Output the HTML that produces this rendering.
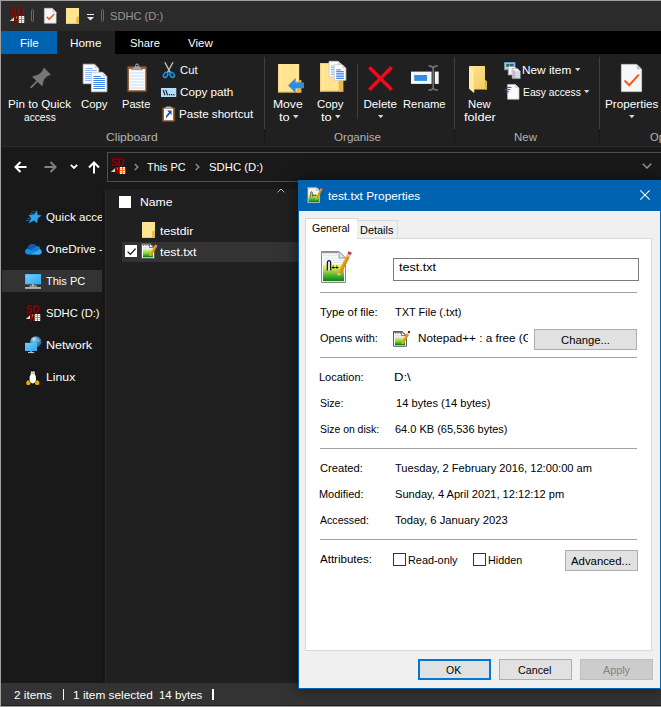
<!DOCTYPE html>
<html lang="en"><head><meta charset="utf-8"><title>SDHC (D:)</title>
<style>
html,body{margin:0;padding:0;background:#191919;}
body{width:661px;height:707px;overflow:hidden;position:relative;font-family:"Liberation Sans", sans-serif;}
#w{position:absolute;left:0;top:0;width:661px;height:707px;overflow:hidden;background:#191919;}
#w div{position:absolute;box-sizing:border-box;}
#w svg{position:absolute;overflow:visible;}
.t{position:absolute;white-space:pre;transform-origin:0 0;font-family:"Liberation Sans", sans-serif;}
</style></head><body><div id="w">
<div style="left:0px;top:0px;width:661px;height:31px;background:#2b2b2b;"></div>
<div style="left:0px;top:31px;width:661px;height:23px;background:#000;"></div>
<div style="left:1px;top:31px;width:56px;height:23px;background:#0063b1;"></div>
<div style="left:57px;top:31px;width:58px;height:23px;background:#202020;"></div>
<div style="left:0px;top:54px;width:661px;height:92px;background:#202020;"></div>
<div style="left:0px;top:146px;width:661px;height:1px;background:#2b2b2b;"></div>
<div style="left:0px;top:147px;width:661px;height:41px;background:#191919;"></div>
<svg style="left:10px;top:7px" width="16" height="16" viewBox="0 0 16 16"><text x="-0.3" y="8" font-family="Liberation Sans, sans-serif" font-weight="bold" font-size="11" fill="#8e0000" textLength="13.6" lengthAdjust="spacingAndGlyphs">SD</text><polygon points="0,14 4.2,10 4.2,14" fill="#e6dc9a"/><polygon points="0,14 2.2,12 2.2,14" fill="#b8c4e8"/><rect x="4.2" y="9" width="1.9" height="7" fill="#8b0000"/><rect x="6.9" y="9" width="1.9" height="7" fill="#8b0000"/><rect x="4.2" y="11.6" width="4.6" height="2" fill="#8b0000"/><rect x="6.1" y="9.4" width="0.8" height="2.2" fill="#b8b030"/><rect x="8.8" y="9" width="5.4" height="7" fill="#fff"/><rect x="11" y="9" width="1" height="7" fill="#ff6a00"/><rect x="8.8" y="12" width="5.4" height="1" fill="#ff6a00"/><rect x="9.5" y="10" width="1" height="1" fill="#ff6a00"/><rect x="12.6" y="10" width="1" height="1" fill="#ff6a00"/><rect x="9.5" y="14" width="1" height="1" fill="#ff6a00"/><rect x="12.6" y="14" width="1" height="1" fill="#ff6a00"/></svg>
<div style="left:31px;top:9px;width:3px;height:13px;border:1px solid #6a6a6a;border-radius:1.5px;"></div>
<svg style="left:44px;top:8px" width="12.5" height="15.5" viewBox="0 0 12 15"><path d="M0.3 0.3 H8 L11.7 4 V14.7 H0.3 Z" fill="#f6f6f6" stroke="#c9c9c9" stroke-width="0.6"/><path d="M8 0.3 V4 H11.7 Z" fill="#cfcfcf"/><path d="M2.6 8.6 L5 11 L9.8 5.8" fill="none" stroke="#f0602a" stroke-width="1.5"/></svg>
<svg style="left:66px;top:8px" width="13" height="16" viewBox="0 0 13 16"><rect x="0" y="0" width="13" height="16" fill="#ffe48f"/><path d="M10.2 9.28 L13 8.32 L13 16 L10.2 16 Z" fill="#e8b84a"/><rect x="0" y="15.2" width="13" height="0.8" fill="#e9c460"/></svg>
<div style="left:87px;top:14px;width:7px;height:1px;background:#e8e8e8;"></div>
<svg style="left:87px;top:16.5px" width="7" height="3.5" viewBox="0 0 7 3.5"><polygon points="0,0 7,0 3.5,3.5" fill="#e8e8e8"/></svg>
<div style="left:101px;top:9px;width:3px;height:13px;border:1px solid #6a6a6a;border-radius:1.5px;"></div>
<span class="t" style="left:110.02px;top:10.18px;font-size:11.6px;line-height:11.6px;color:#989898;transform:scaleX(0.9585);">SDHC (D:)</span>
<span class="t" style="left:19.60px;top:37.18px;font-size:11.6px;line-height:11.6px;color:#fff;transform:scaleX(0.9971);">File</span>
<span class="t" style="left:69.98px;top:37.18px;font-size:11.6px;line-height:11.6px;color:#fff;transform:scaleX(1.0169);">Home</span>
<span class="t" style="left:129.52px;top:37.18px;font-size:11.6px;line-height:11.6px;color:#fff;transform:scaleX(0.9667);">Share</span>
<span class="t" style="left:188.00px;top:37.18px;font-size:11.6px;line-height:11.6px;color:#fff;transform:scaleX(1.0000);">View</span>
<svg style="left:29.5px;top:67px" width="21" height="21" viewBox="0 0 21 21"><g fill="#767676" stroke="#767676"><path d="M0.6 20.8 L8 13.4" stroke-width="1.7" fill="none"/><path d="M14 0.9 L20.5 7.4 L16.9 9.2 L13.6 12.7 L12.1 19 L2.4 9.7 L8.4 7.8 L12.1 4.8 Z" stroke-width="0.5" stroke-linejoin="round"/></g></svg>
<svg style="left:83px;top:64px" width="25" height="28" viewBox="0 0 25 28"><path d="M0.2 0.2 H11.5 L15.7 4.4 V19.7 H0.2 Z" fill="#fdfdfd" stroke="#c8c8c8" stroke-width="0.8"/><path d="M11.5 0.2 V4.4 H15.7 Z" fill="#d4d4d4"/><rect x="2.2" y="4.00" width="7.5" height="1" fill="#8ab8f4"/><rect x="2.2" y="6.00" width="11.5" height="1" fill="#8ab8f4"/><rect x="2.2" y="8.00" width="11.5" height="1" fill="#8ab8f4"/><rect x="2.2" y="10.00" width="11.5" height="1" fill="#8ab8f4"/><rect x="2.2" y="12.00" width="11.5" height="1" fill="#8ab8f4"/><rect x="2.2" y="14.00" width="11.5" height="1" fill="#8ab8f4"/><rect x="2.2" y="16.00" width="11.5" height="1" fill="#8ab8f4"/><path d="M8.4 8.3 H19.7 L23.9 12.5 V27.8 H8.4 Z" fill="#fdfdfd" stroke="#c8c8c8" stroke-width="0.8"/><path d="M19.7 8.3 V12.5 H23.9 Z" fill="#d4d4d4"/><rect x="10.4" y="12.00" width="7.5" height="1" fill="#3b82e6"/><rect x="10.4" y="14.00" width="11.5" height="1" fill="#3b82e6"/><rect x="10.4" y="16.00" width="11.5" height="1" fill="#3b82e6"/><rect x="10.4" y="18.00" width="11.5" height="1" fill="#3b82e6"/><rect x="10.4" y="20.00" width="11.5" height="1" fill="#3b82e6"/><rect x="10.4" y="22.00" width="11.5" height="1" fill="#3b82e6"/><rect x="10.4" y="24.00" width="11.5" height="1" fill="#3b82e6"/></svg>
<svg style="left:127px;top:63px" width="20" height="29" viewBox="0 0 20 29"><rect x="0.4" y="3.4" width="19.2" height="25.4" rx="1.2" fill="#9a6038" stroke="#6e3f20" stroke-width="0.8"/><rect x="2" y="6" width="16.2" height="21.2" fill="#fbfcff"/><path d="M2.6 10 H17.6 M2.6 13 H17.6 M2.6 16 H17.6 M2.6 19 H17.6 M2.6 22 H17.6 M2.6 25 H17.6" stroke="#c4def4" stroke-width="1"/><path d="M4.5 6.8 L6.4 4.2 L8 3.6 Q8.2 0.6 10 0.6 Q11.8 0.6 12 3.6 L13.6 4.2 L15.5 6.8 Z" fill="#a4a4a4" stroke="#6a6a6a" stroke-width="0.5"/><circle cx="10" cy="2.6" r="0.9" fill="#2a2a2a"/></svg>
<svg style="left:163.3px;top:62px" width="12" height="16" viewBox="0 0 12 16"><path d="M1.8 0.2 L7.4 10.6 M10 0.2 L4.4 10.6" stroke="#c4c4c4" stroke-width="1.3" fill="none"/><ellipse cx="2.6" cy="12.9" rx="1.9" ry="2.7" fill="none" stroke="#1f93e0" stroke-width="1.5" transform="rotate(35 2.6 12.9)"/><ellipse cx="9.2" cy="12.9" rx="1.9" ry="2.7" fill="none" stroke="#1f93e0" stroke-width="1.5" transform="rotate(-35 9.2 12.9)"/></svg>
<svg style="left:161px;top:88px" width="16" height="9" viewBox="0 0 16 9"><rect x="0" y="0" width="15.3" height="9" fill="#b6defc"/><path d="M2.2 2 L4 7.2 M4.8 2 L6.6 7.2" stroke="#1b2a3c" stroke-width="1.2"/><rect x="7.8" y="6" width="1.3" height="1.3" fill="#1b2a3c"/><rect x="10" y="6" width="1.3" height="1.3" fill="#1b2a3c"/><rect x="12.2" y="6" width="1.3" height="1.3" fill="#1b2a3c"/></svg>
<svg style="left:162px;top:106px" width="14" height="16" viewBox="0 0 14 16"><rect x="0.4" y="1.4" width="12.4" height="14.2" rx="1.2" fill="#9a6038" stroke="#6e3f20" stroke-width="0.7"/><rect x="2" y="2.6" width="9" height="11.6" fill="#fafcff"/><rect x="3.6" y="0.6" width="6" height="2" rx="0.8" fill="#b0b0b0"/><path d="M5.2 4.6 H9.6 V9 L8.2 7.6 L5.6 10.8 L4.2 9.6 L7 6.6 Z" fill="#1f4fa8"/><path d="M4.2 9.6 Q3.6 10.8 4.2 12 L5.6 10.8 Z" fill="#1f4fa8"/></svg>
<svg style="left:277.8px;top:63.5px" width="27" height="29" viewBox="0 0 27 29"><rect x="0" y="0" width="21.2" height="28.4" fill="#ffe391"/><rect x="0" y="0" width="0.9" height="28.4" fill="#f6d57c"/><rect x="2.8" y="1" width="0.8" height="26.6" fill="#fff0bc"/><rect x="17.6" y="1" width="0.8" height="26.6" fill="#fff0bc" opacity="0.7"/><path d="M18.6 17.2 L23.4 15.8 V28.4 H18.6 Z" fill="#e9b94c"/><rect x="0" y="27.5" width="23.4" height="0.9" fill="#e6bf58"/><path d="M10.1 21.4 L17.6 13.9 V18.5 H26 V24.2 H17.6 V29 Z" fill="#2a8fe4"/></svg>
<svg style="left:293px;top:115px" width="5.6" height="3.4" viewBox="0 0 5.6 3.4"><polygon points="0,0 5.6,0 2.8,3.4" fill="#d4d4d4"/></svg>
<svg style="left:320.2px;top:61.4px" width="27" height="31" viewBox="0 0 27 31"><rect x="0" y="2.1" width="21.2" height="28.4" fill="#ffe391"/><rect x="0" y="2.1" width="0.9" height="28.4" fill="#f6d57c"/><rect x="2.8" y="3.1" width="0.8" height="26.6" fill="#fff0bc"/><rect x="17.6" y="3.1" width="0.8" height="26.6" fill="#fff0bc" opacity="0.7"/><path d="M18.6 19.3 L23.4 17.900000000000002 V30.5 H18.6 Z" fill="#e9b94c"/><rect x="0" y="29.6" width="23.4" height="0.9" fill="#e6bf58"/><path d="M9 0.3 H18.2 L21.8 3.9 V15.9 H9 Z" fill="#fdfdfd" stroke="#c8c8c8" stroke-width="0.8"/><path d="M18.2 0.3 V3.9 H21.8 Z" fill="#d4d4d4"/><rect x="11" y="4.60" width="5.800000000000001" height="1" fill="#8ab8f4"/><rect x="11" y="6.30" width="8.8" height="1" fill="#8ab8f4"/><rect x="11" y="8.00" width="8.8" height="1" fill="#8ab8f4"/><rect x="11" y="9.70" width="8.8" height="1" fill="#8ab8f4"/><rect x="11" y="11.40" width="8.8" height="1" fill="#8ab8f4"/><rect x="11" y="13.10" width="8.8" height="1" fill="#8ab8f4"/><path d="M14.2 3.7 H22.299999999999997 L25.9 7.300000000000001 V19.3 H14.2 Z" fill="#fdfdfd" stroke="#c8c8c8" stroke-width="0.8"/><path d="M22.299999999999997 3.7 V7.300000000000001 H25.9 Z" fill="#d4d4d4"/><rect x="16.2" y="8.40" width="4.699999999999999" height="1" fill="#3b82e6"/><rect x="16.2" y="10.10" width="7.699999999999999" height="1" fill="#3b82e6"/><rect x="16.2" y="11.80" width="7.699999999999999" height="1" fill="#3b82e6"/><rect x="16.2" y="13.50" width="7.699999999999999" height="1" fill="#3b82e6"/><rect x="16.2" y="15.20" width="7.699999999999999" height="1" fill="#3b82e6"/><rect x="16.2" y="16.90" width="7.699999999999999" height="1" fill="#3b82e6"/></svg>
<svg style="left:335px;top:115px" width="5.6" height="3.4" viewBox="0 0 5.6 3.4"><polygon points="0,0 5.6,0 2.8,3.4" fill="#d4d4d4"/></svg>
<svg style="left:368.4px;top:65.5px" width="25" height="25" viewBox="0 0 25 25"><path d="M1.3 1.3 L23.7 23.7 M23.7 1.3 L1.3 23.7" stroke="#e60f1e" stroke-width="3.5" fill="none"/></svg>
<svg style="left:377.8px;top:115px" width="5.4" height="3.2" viewBox="0 0 5.4 3.2"><polygon points="0,0 5.4,0 2.7,3.2" fill="#d4d4d4"/></svg>
<svg style="left:411px;top:65px" width="28" height="26" viewBox="0 0 28 26"><rect x="0" y="6.6" width="27.7" height="12.3" fill="#f6f7f9"/><rect x="3.2" y="10" width="12.8" height="5.9" fill="#2f8fe4"/><rect x="20.6" y="6" width="3.2" height="13.6" fill="#202020"/><path d="M22.2 1.6 V24.4 M17.6 0.9 Q21.4 0.9 22.2 3 Q23 0.9 26.8 0.9 M17.6 25.1 Q21.4 25.1 22.2 23 Q23 25.1 26.8 25.1" stroke="#727272" stroke-width="1.6" fill="none"/></svg>
<svg style="left:469px;top:65.6px" width="19" height="27" viewBox="0 0 19 27"><defs><linearGradient id="g1" x1="0" y1="0" x2="1" y2="1"><stop offset="0" stop-color="#ffe596"/><stop offset="1" stop-color="#f3c95c"/></linearGradient></defs><path d="M0 0 H16 V14 L18 15.4 V23.6 H4.6 V6 Z" fill="url(#g1)"/><path d="M16 14 L18 15.4 V23.6 H16 Z" fill="#e2b040"/><path d="M0 0 L5.6 5.6 L5 27 L0 22.8 Z" fill="#ffeaa6"/><path d="M5.6 5.6 L5 27" stroke="#e8c060" stroke-width="0.5"/></svg>
<svg style="left:504px;top:61.7px" width="17" height="17" viewBox="0 0 17 17"><rect x="0.4" y="0.4" width="10.6" height="7.4" fill="#a8d4ec" stroke="#5c9cc4" stroke-width="0.8"/><rect x="2.2" y="1.8" width="3" height="3" fill="#3a6a3a"/><rect x="5.6" y="1.8" width="4" height="3" fill="#2a5aa8"/><path d="M4.2 4.4 H10.4 L13 7 V13 H4.2 Z" fill="#f4f4f4" stroke="#9a9a9a" stroke-width="0.7"/><path d="M8.2 6.6 H13.6 L16.2 9.2 V16.6 H8.2 Z" fill="#fdfdfd" stroke="#9a9a9a" stroke-width="0.7"/><path d="M10 8 V16" stroke="#e05a6a" stroke-width="0.8"/><path d="M9 10 H15.4 M9 11.8 H15.4 M9 13.6 H15.4 M9 15.2 H15.4" stroke="#7aa8e8" stroke-width="0.7"/></svg>
<svg style="left:575px;top:68px" width="5.4" height="3.2" viewBox="0 0 5.4 3.2"><polygon points="0,0 5.4,0 2.7,3.2" fill="#d4d4d4"/></svg>
<svg style="left:504px;top:84.1px" width="15.4" height="15.6" viewBox="0 0 15.4 15.6"><path d="M3.6 0.4 H11.4 L15 4 V15.2 H3.6 Z" fill="#fbfbfb" stroke="#c4c4c4" stroke-width="0.7"/><path d="M11.4 0.4 V4 H15 Z" fill="#d0d0d0"/><path d="M2.4 3.4 H7.4 M0.6 5.6 H6.2 M1.6 7.8 H5" stroke="#1f5fc0" stroke-width="1"/></svg>
<svg style="left:584.4px;top:90.2px" width="5.4" height="3.2" viewBox="0 0 5.4 3.2"><polygon points="0,0 5.4,0 2.7,3.2" fill="#d4d4d4"/></svg>
<svg style="left:621px;top:64px" width="21" height="28" viewBox="0 0 21 28"><path d="M0.4 0.4 H15.8 L20.6 5.2 V27.6 H0.4 Z" fill="#f6f7f9" stroke="#d0d0d0" stroke-width="0.8"/><path d="M15.8 0.4 V5.2 H20.6 Z" fill="#c8c8c8"/><path d="M3.6 16.6 L8.2 21.2 L17.8 10.6" fill="none" stroke="#fa5a14" stroke-width="2.1"/></svg>
<svg style="left:629px;top:115px" width="5.6" height="3.3" viewBox="0 0 5.6 3.3"><polygon points="0,0 5.6,0 2.8,3.3" fill="#d4d4d4"/></svg>
<span class="t" style="left:7.99px;top:98.18px;font-size:11.6px;line-height:11.6px;color:#fff;transform:scaleX(1.0081);">Pin to Quick</span>
<span class="t" style="left:23.56px;top:111.18px;font-size:11.6px;line-height:11.6px;color:#fff;transform:scaleX(0.8794);">access</span>
<span class="t" style="left:80.51px;top:98.18px;font-size:11.6px;line-height:11.6px;color:#fff;transform:scaleX(0.9811);">Copy</span>
<span class="t" style="left:122.04px;top:98.18px;font-size:11.6px;line-height:11.6px;color:#fff;transform:scaleX(0.9558);">Paste</span>
<span class="t" style="left:179.51px;top:64.18px;font-size:11.6px;line-height:11.6px;color:#fff;transform:scaleX(0.9714);">Cut</span>
<span class="t" style="left:179.50px;top:86.18px;font-size:11.6px;line-height:11.6px;color:#fff;transform:scaleX(1.0097);">Copy path</span>
<span class="t" style="left:179.00px;top:108.18px;font-size:11.6px;line-height:11.6px;color:#fff;transform:scaleX(1.0000);">Paste shortcut</span>
<span class="t" style="left:106.28px;top:131.18px;font-size:11.6px;line-height:11.6px;color:#b4b4b4;transform:scaleX(1.0433);">Clipboard</span>
<div style="left:264px;top:57px;width:1px;height:72px;background:#404040;"></div>
<div style="left:264px;top:129px;width:1px;height:14px;background:#161616;"></div>
<span class="t" style="left:272.95px;top:98.18px;font-size:11.6px;line-height:11.6px;color:#fff;transform:scaleX(1.0467);">Move</span>
<span class="t" style="left:278.72px;top:111.18px;font-size:11.6px;line-height:11.6px;color:#fff;transform:scaleX(1.1111);">to</span>
<span class="t" style="left:316.51px;top:98.18px;font-size:11.6px;line-height:11.6px;color:#fff;transform:scaleX(0.9811);">Copy</span>
<span class="t" style="left:320.72px;top:111.18px;font-size:11.6px;line-height:11.6px;color:#fff;transform:scaleX(1.1111);">to</span>
<div style="left:357px;top:64px;width:1px;height:55px;background:#404040;"></div>
<span class="t" style="left:363.50px;top:98.18px;font-size:11.6px;line-height:11.6px;color:#fff;transform:scaleX(1.0000);">Delete</span>
<span class="t" style="left:403.03px;top:98.18px;font-size:11.6px;line-height:11.6px;color:#fff;transform:scaleX(0.9704);">Rename</span>
<span class="t" style="left:334.00px;top:131.18px;font-size:11.6px;line-height:11.6px;color:#b4b4b4;transform:scaleX(1.0000);">Organise</span>
<div style="left:454px;top:57px;width:1px;height:72px;background:#404040;"></div>
<div style="left:454px;top:129px;width:1px;height:14px;background:#161616;"></div>
<span class="t" style="left:468.23px;top:98.18px;font-size:11.6px;line-height:11.6px;color:#fff;transform:scaleX(0.9708);">New</span>
<span class="t" style="left:464.03px;top:111.18px;font-size:11.6px;line-height:11.6px;color:#fff;transform:scaleX(1.0947);">folder</span>
<span class="t" style="left:522.48px;top:64.18px;font-size:11.6px;line-height:11.6px;color:#fff;transform:scaleX(1.0194);">New item</span>
<span class="t" style="left:522.61px;top:86.18px;font-size:11.6px;line-height:11.6px;color:#fff;transform:scaleX(0.8894);">Easy access</span>
<span class="t" style="left:513.81px;top:131.18px;font-size:11.6px;line-height:11.6px;color:#b4b4b4;transform:scaleX(0.9888);">New</span>
<div style="left:599px;top:57px;width:1px;height:72px;background:#404040;"></div>
<div style="left:599px;top:129px;width:1px;height:14px;background:#161616;"></div>
<span class="t" style="left:604.99px;top:98.18px;font-size:11.6px;line-height:11.6px;color:#fff;transform:scaleX(1.0097);">Properties</span>
<span class="t" style="left:649.52px;top:131.18px;font-size:11.6px;line-height:11.6px;color:#b4b4b4;transform:scaleX(0.9655);">Op</span>
<div style="left:107px;top:152px;width:560px;height:30px;border:1px solid #4d4d4d;"></div>
<svg style="left:14px;top:161px" width="13" height="12" viewBox="0 0 13 12"><path d="M12.5 6 H1.5 M6.5 1 L1.5 6 L6.5 11" fill="none" stroke="#fff" stroke-width="2"/></svg>
<svg style="left:44px;top:161px" width="13" height="12" viewBox="0 0 13 12"><path d="M0.5 6 H11.5 M6.5 1 L11.5 6 L6.5 11" fill="none" stroke="#808080" stroke-width="2"/></svg>
<svg style="left:70px;top:163.5px" width="8" height="5" viewBox="0 0 8 5"><path d="M0.8 0.8 L4 4 L7.2 0.8" fill="none" stroke="#fff" stroke-width="1.8"/></svg>
<svg style="left:88px;top:160.5px" width="12" height="13" viewBox="0 0 12 13"><path d="M6 12.5 V1.5 M1 6.5 L6 1.5 L11 6.5" fill="none" stroke="#fff" stroke-width="2"/></svg>
<svg style="left:110.6px;top:158px" width="16" height="16" viewBox="0 0 16 16"><text x="-0.3" y="8" font-family="Liberation Sans, sans-serif" font-weight="bold" font-size="11" fill="#8e0000" textLength="13.6" lengthAdjust="spacingAndGlyphs">SD</text><polygon points="0,14 4.2,10 4.2,14" fill="#e6dc9a"/><polygon points="0,14 2.2,12 2.2,14" fill="#b8c4e8"/><rect x="4.2" y="9" width="1.9" height="7" fill="#8b0000"/><rect x="6.9" y="9" width="1.9" height="7" fill="#8b0000"/><rect x="4.2" y="11.6" width="4.6" height="2" fill="#8b0000"/><rect x="6.1" y="9.4" width="0.8" height="2.2" fill="#b8b030"/><rect x="8.8" y="9" width="5.4" height="7" fill="#fff"/><rect x="11" y="9" width="1" height="7" fill="#ff6a00"/><rect x="8.8" y="12" width="5.4" height="1" fill="#ff6a00"/><rect x="9.5" y="10" width="1" height="1" fill="#ff6a00"/><rect x="12.6" y="10" width="1" height="1" fill="#ff6a00"/><rect x="9.5" y="14" width="1" height="1" fill="#ff6a00"/><rect x="12.6" y="14" width="1" height="1" fill="#ff6a00"/></svg>
<svg style="left:133.5px;top:163px" width="5" height="8" viewBox="0 0 5 8"><path d="M0.8 1 L3.8 4 L0.8 7" fill="none" stroke="#8c8c8c" stroke-width="1.5"/></svg>
<svg style="left:195px;top:163px" width="5" height="8" viewBox="0 0 5 8"><path d="M0.8 1 L3.8 4 L0.8 7" fill="none" stroke="#8c8c8c" stroke-width="1.5"/></svg>
<svg style="left:642px;top:163px" width="10" height="6" viewBox="0 0 10 6"><path d="M0.8 0.8 L5 5 L9.2 0.8" fill="none" stroke="#9a9a9a" stroke-width="1.4"/></svg>
<span class="t" style="left:147.27px;top:161.18px;font-size:11.6px;line-height:11.6px;color:#fff;transform:scaleX(0.9383);">This PC</span>
<span class="t" style="left:208.51px;top:161.18px;font-size:11.6px;line-height:11.6px;color:#fff;transform:scaleX(0.9770);">SDHC (D:)</span>
<div style="left:1px;top:188px;width:103px;height:495px;background:#191919;"></div>
<div style="left:2px;top:270px;width:100px;height:22px;background:#333;"></div>
<span class="t" style="left:46.10px;top:211.18px;font-size:11.6px;line-height:11.6px;color:#fff;transform:scaleX(1.0000);">Quick access</span>
<span class="t" style="left:46.09px;top:243.18px;font-size:11.6px;line-height:11.6px;color:#fff;transform:scaleX(1.0145);">OneDrive -</span>
<span class="t" style="left:46.36px;top:275.18px;font-size:11.6px;line-height:11.6px;color:#fff;transform:scaleX(0.9506);">This PC</span>
<span class="t" style="left:46.12px;top:307.18px;font-size:11.6px;line-height:11.6px;color:#fff;transform:scaleX(0.9677);">SDHC (D:)</span>
<span class="t" style="left:45.52px;top:339.18px;font-size:11.6px;line-height:11.6px;color:#fff;transform:scaleX(1.0843);">Network</span>
<span class="t" style="left:45.54px;top:371.18px;font-size:11.6px;line-height:11.6px;color:#fff;transform:scaleX(1.0566);">Linux</span>
<svg style="left:26px;top:210px" width="16" height="13" viewBox="0 0 16 13"><polygon points="10.7,0.7 11.3,4.9 15.1,5.5 11.5,8.4 10.9,12.9 8,10.2 3.1,12.9 5.3,8.2 2.9,5.3 8.2,4.5" fill="#2aa4f4" stroke="#2aa4f4" stroke-width="0.4" stroke-linejoin="round"/><path d="M5.5 1.3 H8.6 M4 3.4 H7.6 M1 8.5 H4.2 M0 10.5 H3.2" stroke="#1d7fc4" stroke-width="0.9" opacity="0.75"/></svg>
<svg style="left:24.7px;top:243px" width="17" height="12" viewBox="0 0 17 12"><path d="M3.2 11.4 Q0 11.4 0 8.6 Q0 6 2.6 5.4 Q3.4 1.6 7 1.2 Q10 0.8 11.4 3.6 Q12.4 3.2 13.4 3.6 Q15.2 4.4 15 6.2 Q16.6 6.8 16.6 8.8 Q16.6 11.4 14 11.4 Z" fill="#1490df"/><path d="M2.6 5.4 Q3.4 1.6 7 1.2 Q10 0.8 11.4 3.6 L6 7.4 Z" fill="#0a5fb4"/><path d="M11.4 3.6 Q12.4 3.2 13.4 3.6 Q15.2 4.4 15 6.2 L10.5 8.6 L6 7.4 Z" fill="#1a78d0"/><path d="M15 6.2 Q16.6 6.8 16.6 8.8 Q16.6 11.4 14 11.4 L6 11.4 Z" fill="#3aaaf2"/></svg>
<svg style="left:25px;top:274px" width="16" height="15" viewBox="0 0 16 15"><defs><linearGradient id="g2" x1="0" y1="0" x2="1" y2="1"><stop offset="0" stop-color="#7cd6fc"/><stop offset="1" stop-color="#2aa0ee"/></linearGradient></defs><rect x="0" y="0" width="16" height="10.2" fill="url(#g2)"/><rect x="0.4" y="0.4" width="15.2" height="9.4" fill="none" stroke="#3cb4f4" stroke-width="0.8"/><rect x="7.2" y="10.2" width="1.6" height="1.8" fill="#c8c8c8"/><rect x="4.4" y="11.6" width="7.4" height="0.9" fill="#e0e0e0"/><rect x="0" y="13.1" width="16" height="1.7" fill="#bcc4cc"/></svg>
<svg style="left:26px;top:305px" width="16" height="16" viewBox="0 0 16 16"><text x="-0.3" y="8" font-family="Liberation Sans, sans-serif" font-weight="bold" font-size="11" fill="#8e0000" textLength="13.6" lengthAdjust="spacingAndGlyphs">SD</text><polygon points="0,14 4.2,10 4.2,14" fill="#e6dc9a"/><polygon points="0,14 2.2,12 2.2,14" fill="#b8c4e8"/><rect x="4.2" y="9" width="1.9" height="7" fill="#8b0000"/><rect x="6.9" y="9" width="1.9" height="7" fill="#8b0000"/><rect x="4.2" y="11.6" width="4.6" height="2" fill="#8b0000"/><rect x="6.1" y="9.4" width="0.8" height="2.2" fill="#b8b030"/><rect x="8.8" y="9" width="5.4" height="7" fill="#fff"/><rect x="11" y="9" width="1" height="7" fill="#ff6a00"/><rect x="8.8" y="12" width="5.4" height="1" fill="#ff6a00"/><rect x="9.5" y="10" width="1" height="1" fill="#ff6a00"/><rect x="12.6" y="10" width="1" height="1" fill="#ff6a00"/><rect x="9.5" y="14" width="1" height="1" fill="#ff6a00"/><rect x="12.6" y="14" width="1" height="1" fill="#ff6a00"/></svg>
<svg style="left:24.8px;top:336px" width="17" height="17.4" viewBox="0 0 17 17.4"><defs><radialGradient id="g3" cx="0.35" cy="0.3" r="0.8"><stop offset="0" stop-color="#a8dcf4"/><stop offset="0.5" stop-color="#3a94c8"/><stop offset="1" stop-color="#1c5c8c"/></radialGradient><linearGradient id="g4" x1="0" y1="0" x2="1" y2="1"><stop offset="0" stop-color="#6cccfc"/><stop offset="1" stop-color="#3aa4ec"/></linearGradient></defs><circle cx="10.8" cy="5.8" r="5.6" fill="url(#g3)"/><path d="M7.6 2.4 Q9.6 1.4 10.4 2.6 Q9.4 4 8 3.8 Z M12.6 3.2 Q14.6 4 14.2 6.2 Q13 5.6 12.6 3.2 Z" fill="#d4f0fc" opacity="0.8"/><rect x="0" y="6.8" width="12" height="8.2" fill="url(#g4)"/><rect x="5.4" y="15" width="1.2" height="1.4" fill="#c8c8c8"/><rect x="3" y="16.2" width="6.2" height="0.9" fill="#e0e0e0"/></svg>
<svg style="left:26.2px;top:369px" width="13.6" height="16.4" viewBox="0 0 13.6 16.4"><path d="M6.8 0 Q9.4 0 9.4 3.4 Q9.6 5.6 11.4 8.4 Q12.8 11.4 12 14.4 L1.6 14.4 Q0.8 11.4 2.2 8.4 Q4 5.6 4.2 3.4 Q4.2 0 6.8 0 Z" fill="#0c0c0c"/><ellipse cx="6.8" cy="9.6" rx="3.3" ry="4.8" fill="#fbfbfb"/><ellipse cx="6.8" cy="4.6" rx="2.2" ry="1.6" fill="#fbfbfb"/><ellipse cx="5.8" cy="3" rx="0.8" ry="0.9" fill="#e8e8e8"/><ellipse cx="7.9" cy="3" rx="0.8" ry="0.9" fill="#e8e8e8"/><path d="M5 4.4 Q6.8 3.2 8.6 4.4 Q6.8 6 5 4.4 Z" fill="#f0b000"/><path d="M0.2 13.4 Q1.4 10.6 3 11.6 Q5 13.8 4.6 15 Q3 16.6 0.4 15.4 Z" fill="#eaa800"/><path d="M13.4 13.4 Q12.2 10.6 10.4 11.6 Q8.6 13.8 9 15.2 Q10.6 16.6 13.2 15.4 Z" fill="#eaa800"/></svg>
<div style="left:102px;top:188px;width:3px;height:495px;background:#191919;"></div>
<div style="left:103px;top:189px;width:2px;height:494px;background:#161616;"></div>
<div style="left:105px;top:189px;width:1px;height:494px;background:#2b2b2b;"></div>
<div style="left:106px;top:189px;width:555px;height:494px;background:#202020;"></div>
<div style="left:119px;top:196px;width:11.5px;height:11.5px;background:#fff;"></div>
<span class="t" style="left:140.45px;top:195.68px;font-size:11.6px;line-height:11.6px;color:#fff;transform:scaleX(1.0508);">Name</span>
<svg style="left:276.8px;top:188.4px" width="8" height="5" viewBox="0 0 8 5"><path d="M0.6 4.4 L4 1 L7.4 4.4" fill="none" stroke="#b4b4b4" stroke-width="1"/></svg>
<svg style="left:142px;top:222px" width="13" height="16" viewBox="0 0 13 16"><rect x="0" y="0" width="13" height="16" fill="#ffe48f"/><path d="M10.2 9.28 L13 8.32 L13 16 L10.2 16 Z" fill="#e8b84a"/><rect x="0" y="15.2" width="13" height="0.8" fill="#e9c460"/></svg>
<span class="t" style="left:159.74px;top:224.68px;font-size:11.6px;line-height:11.6px;color:#fff;transform:scaleX(1.0560);">testdir</span>
<div style="left:122px;top:242px;width:539px;height:20px;background:#333;"></div>
<div style="left:125px;top:245px;width:12.4px;height:12.4px;background:#fff;"></div>
<svg style="left:126px;top:246px" width="11" height="11" viewBox="0 0 11 11"><path d="M1.6 5.6 L4.4 8.4 L9.6 2.6" fill="none" stroke="#111" stroke-width="1.3"/></svg>
<svg style="left:140.5px;top:243px" width="17" height="16" viewBox="0 0 17 16"><defs><linearGradient id="g5" x1="0" y1="0" x2="0" y2="1"><stop offset="0" stop-color="#e4ec70"/><stop offset="0.45" stop-color="#8ed83c"/><stop offset="0.85" stop-color="#1f9a1f"/><stop offset="1" stop-color="#075c07"/></linearGradient></defs><path d="M0.5 0.5 H9 L13.5 4.5 V15.3 H0.5 Z" fill="#fcfcfc" stroke="#5a5a5a" stroke-width="1"/><path d="M1 1 H8.4" stroke="#5a5a5a" stroke-width="1.4"/><path d="M2 2.2 h1.2 M4.4 2.2 h1.2 M6.8 2.2 h1.2" stroke="#5a5a5a" stroke-width="1"/><path d="M8.6 0.6 V4.6 H13 Z" fill="#fff" stroke="#5a5a5a" stroke-width="0.9"/><path d="M2 4.6 H8 M2 6 H12" stroke="#c4d8ec" stroke-width="0.7"/><rect x="2" y="6.6" width="10" height="7.6" fill="url(#g5)"/><polygon points="13.6,2.6 15.8,3.8 10.6,12.4 8.6,11.0" fill="#f2a516"/><polygon points="14.8,3.2 15.8,3.8 10.6,12.4 9.8,11.9" fill="#d88a0a"/><polygon points="8.6,11.0 10.6,12.4 8.0,13.4" fill="#e8c090"/><polygon points="8.6,12.4 9.2,12.9 8.0,13.4" fill="#3a2a1a"/><polygon points="14.2,1.5 16.4,2.7 15.8,3.8 13.6,2.6" fill="#b8c4d4"/><rect x="15" y="0" width="2" height="2" fill="#a40000"/></svg>
<span class="t" style="left:159.73px;top:245.68px;font-size:11.6px;line-height:11.6px;color:#fff;transform:scaleX(1.0667);">test.txt</span>
<div style="left:0px;top:683px;width:661px;height:23px;background:#333;"></div>
<span class="t" style="left:14.49px;top:689.18px;font-size:11.6px;line-height:11.6px;color:#fff;transform:scaleX(1.0137);">2 items</span>
<span class="t" style="left:72.98px;top:689.18px;font-size:11.6px;line-height:11.6px;color:#fff;transform:scaleX(1.0230);">1 item selected</span>
<span class="t" style="left:159.01px;top:689.18px;font-size:11.6px;line-height:11.6px;color:#fff;transform:scaleX(0.9882);">14 bytes</span>
<div style="left:62.6px;top:689px;width:1.4px;height:11px;background:#fff;"></div>
<div style="left:212.3px;top:689px;width:1.4px;height:11px;background:#fff;"></div>
<div style="left:1px;top:705px;width:660px;height:1px;background:#1c1c1c;"></div>
<div style="left:0px;top:0px;width:661px;height:1px;background:#a0a0a0;"></div>
<div style="left:0px;top:0px;width:1px;height:707px;background:#a0a0a0;"></div>
<div style="left:0px;top:706px;width:661px;height:1px;background:#a0a0a0;"></div>
<div style="left:298px;top:180px;width:363px;height:509px;background:#f0f0f0;border:1px solid #0063b1;box-shadow:0 0 14px rgba(0,0,0,.55);"></div>
<div style="left:298px;top:180px;width:363px;height:31px;background:#0063b1;"></div>
<svg style="left:307px;top:187px" width="16" height="16" viewBox="0 0 32 32"><defs><linearGradient id="g6" x1="0" y1="0" x2="0" y2="1"><stop offset="0" stop-color="#f2f8b0"/><stop offset="0.3" stop-color="#c0e44c"/><stop offset="0.75" stop-color="#3aa62a"/><stop offset="1" stop-color="#0f7f12"/></linearGradient></defs><path d="M1.5 0.5 H19 L25.5 7 V31.5 H1.5 Z" fill="#fbfcfe" stroke="#8a8a8a" stroke-width="1"/><path d="M3 4.5 H18 M3 7 H24 M3 9.3 H24 M3 11.5 H24" stroke="#cfe0ee" stroke-width="0.7"/><rect x="3" y="13" width="21" height="17.2" fill="url(#g6)"/><path d="M2.5 1.6 H18" stroke="#333" stroke-width="1.2" stroke-dasharray="1 1"/><path d="M19 0.5 V7 H25.5 Z" fill="#e4e4e4" stroke="#8a8a8a" stroke-width="0.8"/><path d="M7.3 19.5 V11.6 Q7.3 9.6 9 9.6 Q10.7 9.6 10.7 11.6 V19.5" fill="#dcdcdc" stroke="#000" stroke-width="1.1"/><text x="11.6" y="18.6" font-family="Liberation Sans, sans-serif" font-weight="bold" font-size="7.5" fill="#000" textLength="7" lengthAdjust="spacingAndGlyphs">++</text><polygon points="17.72,21.61 20.92,23.25 29.55,6.31 26.35,4.67" fill="#f2a516"/><polygon points="19.3,22.4 20.92,23.25 29.55,6.31 27.95,5.5" fill="#d98a0a"/><polygon points="17.72,21.61 20.92,23.25 17.5,26" fill="#e8c8a0"/><polygon points="18.3,24 19,24.6 17.5,26" fill="#333"/><polygon points="26.35,4.67 29.55,6.31 30.69,4.08 27.49,2.44" fill="#c4c4c4"/><polygon points="27.49,2.44 30.69,4.08 31.83,1.85 28.63,0.21" fill="#c8283c"/></svg>
<svg style="left:640px;top:190px" width="10" height="10" viewBox="0 0 10 10"><path d="M0.3 0.3 L9.7 9.7 M9.7 0.3 L0.3 9.7" stroke="#fff" stroke-width="1.1"/></svg>
<span class="t" style="left:327.74px;top:190.18px;font-size:11.6px;line-height:11.6px;color:#fff;transform:scaleX(1.0223);">test.txt Properties</span>
<div style="left:305px;top:238px;width:347px;height:413px;background:#fff;border:1px solid #d9d9d9;"></div>
<div style="left:305px;top:218px;width:53px;height:21px;background:#fff;border:1px solid #d9d9d9;border-bottom:none;"></div>
<div style="left:357px;top:220px;width:41px;height:18px;background:#f0f0f0;border:1px solid #d9d9d9;border-bottom:none;border-left:none;"></div>
<span class="t" style="left:312.04px;top:222.18px;font-size:11.6px;line-height:11.6px;color:#000;transform:scaleX(0.9125);">General</span>
<span class="t" style="left:360.06px;top:224.18px;font-size:11.6px;line-height:11.6px;color:#000;transform:scaleX(0.9412);">Details</span>
<div style="left:393px;top:258px;width:246px;height:23px;background:#fff;border:1px solid #7a7a7a;"></div>
<svg style="left:320px;top:251px" width="32" height="32" viewBox="0 0 32 32"><defs><linearGradient id="g7" x1="0" y1="0" x2="0" y2="1"><stop offset="0" stop-color="#f2f8b0"/><stop offset="0.3" stop-color="#c0e44c"/><stop offset="0.75" stop-color="#3aa62a"/><stop offset="1" stop-color="#0f7f12"/></linearGradient></defs><path d="M1.5 0.5 H19 L25.5 7 V31.5 H1.5 Z" fill="#fbfcfe" stroke="#8a8a8a" stroke-width="1"/><path d="M3 4.5 H18 M3 7 H24 M3 9.3 H24 M3 11.5 H24" stroke="#cfe0ee" stroke-width="0.7"/><rect x="3" y="13" width="21" height="17.2" fill="url(#g7)"/><path d="M2.5 1.6 H18" stroke="#333" stroke-width="1.2" stroke-dasharray="1 1"/><path d="M19 0.5 V7 H25.5 Z" fill="#e4e4e4" stroke="#8a8a8a" stroke-width="0.8"/><path d="M7.3 19.5 V11.6 Q7.3 9.6 9 9.6 Q10.7 9.6 10.7 11.6 V19.5" fill="#dcdcdc" stroke="#000" stroke-width="1.1"/><text x="11.6" y="18.6" font-family="Liberation Sans, sans-serif" font-weight="bold" font-size="7.5" fill="#000" textLength="7" lengthAdjust="spacingAndGlyphs">++</text><polygon points="17.72,21.61 20.92,23.25 29.55,6.31 26.35,4.67" fill="#f2a516"/><polygon points="19.3,22.4 20.92,23.25 29.55,6.31 27.95,5.5" fill="#d98a0a"/><polygon points="17.72,21.61 20.92,23.25 17.5,26" fill="#e8c8a0"/><polygon points="18.3,24 19,24.6 17.5,26" fill="#333"/><polygon points="26.35,4.67 29.55,6.31 30.69,4.08 27.49,2.44" fill="#c4c4c4"/><polygon points="27.49,2.44 30.69,4.08 31.83,1.85 28.63,0.21" fill="#c8283c"/></svg>
<span class="t" style="left:399.03px;top:261.18px;font-size:11.6px;line-height:11.6px;color:#000;transform:scaleX(1.0815);">test.txt</span>
<div style="left:320px;top:292px;width:317px;height:1px;background:#a0a0a0;"></div>
<div style="left:320px;top:357px;width:317px;height:1px;background:#a0a0a0;"></div>
<div style="left:320px;top:448px;width:317px;height:1px;background:#a0a0a0;"></div>
<div style="left:320px;top:539px;width:317px;height:1px;background:#a0a0a0;"></div>
<span class="t" style="left:319.76px;top:306.18px;font-size:11.6px;line-height:11.6px;color:#000;transform:scaleX(0.9741);">Type of file:</span>
<span class="t" style="left:395.26px;top:306.18px;font-size:11.6px;line-height:11.6px;color:#000;transform:scaleX(0.9478);">TXT File (.txt)</span>
<span class="t" style="left:319.53px;top:332.18px;font-size:11.6px;line-height:11.6px;color:#000;transform:scaleX(0.9456);">Opens with:</span>
<svg style="left:393px;top:331px" width="17" height="16" viewBox="0 0 17 16"><defs><linearGradient id="g8" x1="0" y1="0" x2="0" y2="1"><stop offset="0" stop-color="#e4ec70"/><stop offset="0.45" stop-color="#8ed83c"/><stop offset="0.85" stop-color="#1f9a1f"/><stop offset="1" stop-color="#075c07"/></linearGradient></defs><path d="M0.5 0.5 H9 L13.5 4.5 V15.3 H0.5 Z" fill="#fcfcfc" stroke="#5a5a5a" stroke-width="1"/><path d="M1 1 H8.4" stroke="#5a5a5a" stroke-width="1.4"/><path d="M2 2.2 h1.2 M4.4 2.2 h1.2 M6.8 2.2 h1.2" stroke="#5a5a5a" stroke-width="1"/><path d="M8.6 0.6 V4.6 H13 Z" fill="#fff" stroke="#5a5a5a" stroke-width="0.9"/><path d="M2 4.6 H8 M2 6 H12" stroke="#c4d8ec" stroke-width="0.7"/><rect x="2" y="6.6" width="10" height="7.6" fill="url(#g8)"/><polygon points="13.6,2.6 15.8,3.8 10.6,12.4 8.6,11.0" fill="#f2a516"/><polygon points="14.8,3.2 15.8,3.8 10.6,12.4 9.8,11.9" fill="#d88a0a"/><polygon points="8.6,11.0 10.6,12.4 8.0,13.4" fill="#e8c090"/><polygon points="8.6,12.4 9.2,12.9 8.0,13.4" fill="#3a2a1a"/><polygon points="14.2,1.5 16.4,2.7 15.8,3.8 13.6,2.6" fill="#b8c4d4"/><rect x="15" y="0" width="2" height="2" fill="#a40000"/></svg>
<span class="t" style="left:417.99px;top:332.18px;font-size:11.6px;line-height:11.6px;color:#000;transform:scaleX(1.0095);">Notepad++ : a free (GNU)</span>
<div style="left:527.6px;top:330px;width:111px;height:16px;background:#fff;"></div>
<div style="left:534px;top:329px;width:103px;height:21px;background:#e1e1e1;border:1px solid #adadad;"></div>
<span class="t" style="left:560.51px;top:334.18px;font-size:11.6px;line-height:11.6px;color:#000;transform:scaleX(0.9744);">Change...</span>
<span class="t" style="left:319.05px;top:371.18px;font-size:11.6px;line-height:11.6px;color:#000;transform:scaleX(0.9467);">Location:</span>
<span class="t" style="left:394.37px;top:371.18px;font-size:11.6px;line-height:11.6px;color:#000;transform:scaleX(1.1273);">D:\</span>
<span class="t" style="left:319.55px;top:397.18px;font-size:11.6px;line-height:11.6px;color:#000;transform:scaleX(0.9072);">Size:</span>
<span class="t" style="left:396.34px;top:397.18px;font-size:11.6px;line-height:11.6px;color:#000;transform:scaleX(0.9588);">14 bytes (14 bytes)</span>
<span class="t" style="left:319.55px;top:423.18px;font-size:11.6px;line-height:11.6px;color:#000;transform:scaleX(0.8981);">Size on disk:</span>
<span class="t" style="left:395.43px;top:423.18px;font-size:11.6px;line-height:11.6px;color:#000;transform:scaleX(0.9489);">64.0 KB (65,536 bytes)</span>
<span class="t" style="left:319.52px;top:462.18px;font-size:11.6px;line-height:11.6px;color:#000;transform:scaleX(0.9651);">Created:</span>
<span class="t" style="left:395.26px;top:462.18px;font-size:11.6px;line-height:11.6px;color:#000;transform:scaleX(0.9584);">Tuesday, 2 February 2016, 12:00:00 am</span>
<span class="t" style="left:319.06px;top:488.18px;font-size:11.6px;line-height:11.6px;color:#000;transform:scaleX(0.9444);">Modified:</span>
<span class="t" style="left:395.02px;top:488.18px;font-size:11.6px;line-height:11.6px;color:#000;transform:scaleX(0.9559);">Sunday, 4 April 2021, 12:12:12 pm</span>
<span class="t" style="left:320.00px;top:514.18px;font-size:11.6px;line-height:11.6px;color:#000;transform:scaleX(0.9143);">Accessed:</span>
<span class="t" style="left:395.26px;top:514.18px;font-size:11.6px;line-height:11.6px;color:#000;transform:scaleX(0.9676);">Today, 6 January 2023</span>
<span class="t" style="left:320.00px;top:553.18px;font-size:11.6px;line-height:11.6px;color:#000;transform:scaleX(0.9951);">Attributes:</span>
<div style="left:393px;top:553px;width:13px;height:13px;background:#fff;border:1px solid #333;"></div>
<span class="t" style="left:407.56px;top:554.18px;font-size:11.6px;line-height:11.6px;color:#000;transform:scaleX(0.9372);">Read-only</span>
<div style="left:473px;top:553px;width:13px;height:13px;background:#fff;border:1px solid #333;"></div>
<span class="t" style="left:487.97px;top:554.18px;font-size:11.6px;line-height:11.6px;color:#000;transform:scaleX(0.9286);">Hidden</span>
<div style="left:565px;top:550px;width:73px;height:21px;background:#e1e1e1;border:1px solid #adadad;"></div>
<span class="t" style="left:570.50px;top:555.18px;font-size:11.6px;line-height:11.6px;color:#000;transform:scaleX(0.9793);">Advanced...</span>
<div style="left:418px;top:659px;width:73px;height:21px;background:#e1e1e1;border:2px solid #0078d7;"></div>
<span class="t" style="left:445.55px;top:664.18px;font-size:11.6px;line-height:11.6px;color:#000;transform:scaleX(0.9062);">OK</span>
<div style="left:499px;top:659px;width:73px;height:21px;background:#e1e1e1;border:1px solid #adadad;"></div>
<span class="t" style="left:517.84px;top:664.18px;font-size:11.6px;line-height:11.6px;color:#000;transform:scaleX(0.9266);">Cancel</span>
<div style="left:580px;top:659px;width:73px;height:21px;background:#cccccc;border:1px solid #bfbfbf;"></div>
<span class="t" style="left:603.00px;top:664.18px;font-size:11.6px;line-height:11.6px;color:#838383;transform:scaleX(0.9310);">Apply</span>
</div></body></html>
